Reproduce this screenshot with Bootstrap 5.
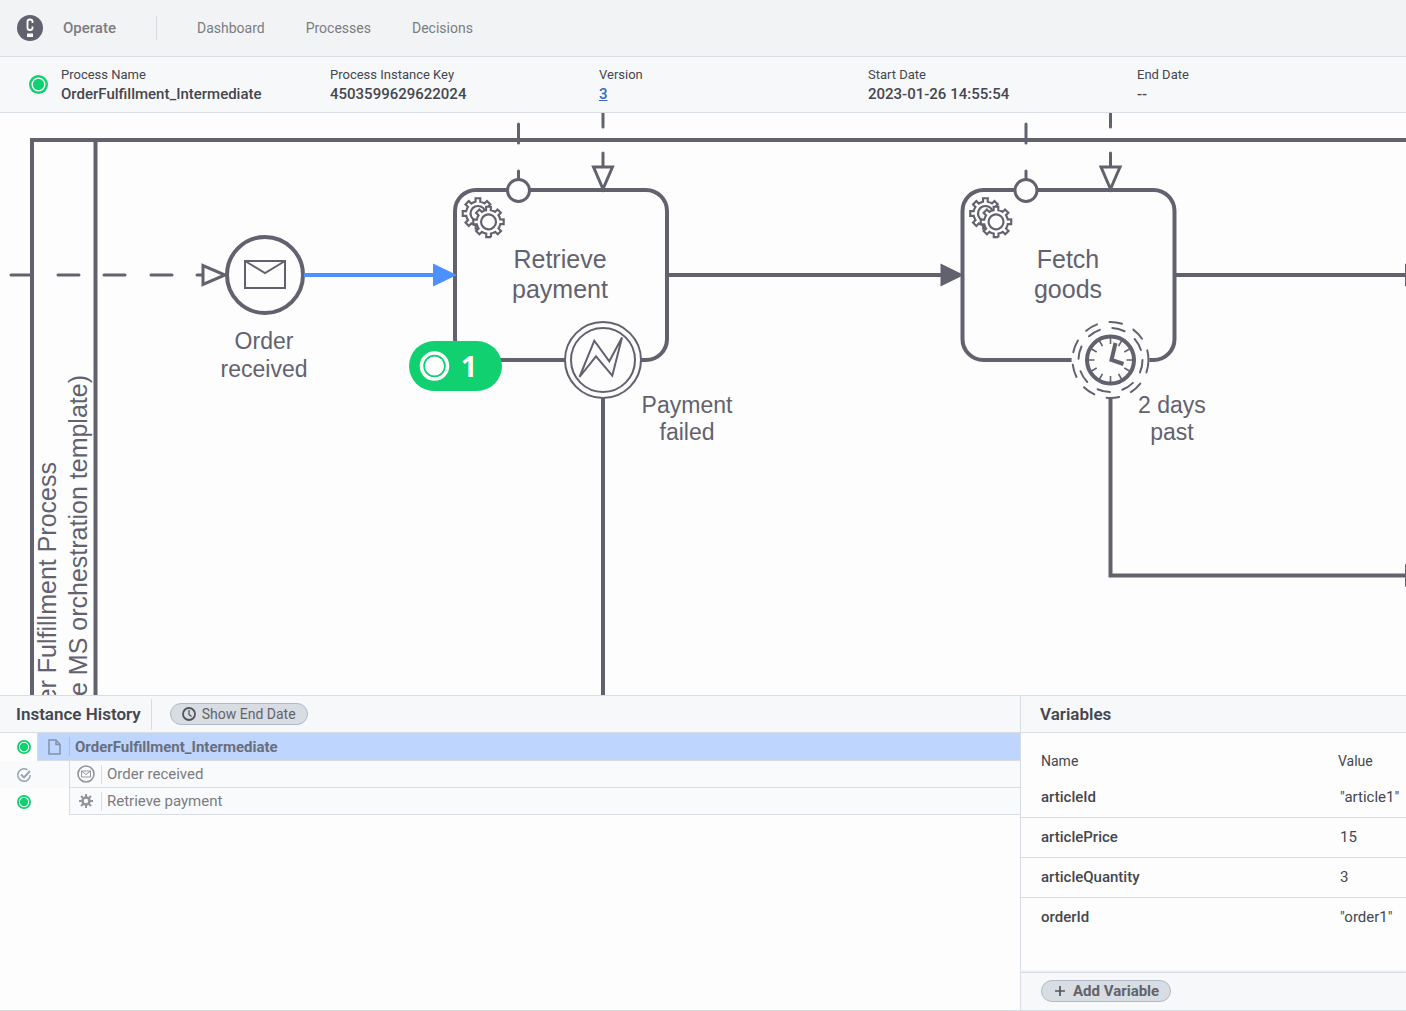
<!DOCTYPE html>
<html lang="en">
<head>
<meta charset="utf-8">
<meta name="viewport" content="width=device-width, initial-scale=1">
<title>Operate: OrderFulfillment_Intermediate</title>
<link href="https://cdn.jsdelivr.net/npm/bootstrap@5.3.0/dist/css/bootstrap.min.css" rel="stylesheet">
<style>
  :root { --line: #d8dce3; --panel: #f7f8fa; --ink: #45464e; --muted: #7b7c82; --shape: #62626e; }
  body { font-family: Roboto, "Noto Sans", sans-serif; font-size: 15px; line-height: 20px; color: var(--ink); background: #fdfdfe; overflow: hidden; }
  svg { display: block; flex: none; }
  .app-bar { background: #f2f3f5; border-bottom: 1px solid var(--line); height: 57px; padding: 0 16px; }
  .app-bar a { color: var(--muted); text-decoration: none; }
  .product { gap: 19px; font-weight: 500; }
  .rule { width: 1px; background: var(--line); }
  .app-bar .rule { height: 24px; margin: 0 40px; }
  .main-links { gap: 41px; font-size: 14px; }
  .instance-bar { background: var(--panel); border-bottom: 1px solid var(--line); height: 56px; padding-left: 29px; }
  .instance-bar svg { margin-right: 13px; }
  .instance-bar dl { flex: 1 1 0; min-width: 0; }
  .instance-bar dt { font-size: 13px; line-height: 18px; font-weight: 400; }
  .instance-bar dd { font-weight: 500; margin: 0; }
  .instance-bar dd a { color: #346ac4; }
  .diagram { min-height: 0; }
  .diagram text { font-family: "Liberation Sans", Arial, sans-serif; font-size: 25px; fill: var(--shape); text-anchor: middle; }
  .diagram .ext text { font-size: 23px; }
  .diagram .side text { text-anchor: end; }
  .diagram .tally { font-family: "Noto Sans", sans-serif; font-size: 29px; font-weight: 700; fill: #fff; }
  .bottom { height: 316px; border-top: 1px solid var(--line); border-bottom: 1px solid var(--line); }
  .history { flex: 0 0 1021px; width: 1021px; border-right: 1px solid var(--line); }
  .panel-head { height: 37px; background: var(--panel); border-bottom: 1px solid var(--line); }
  .panel-head h2 { font-size: 17px; line-height: 20px; font-weight: 600; margin: 0; }
  .panel-head .rule { height: 31px; margin: 0 18px 0 10px; }
  .pill { border: 1px solid #b0bac7; background: #d8dce3; border-radius: 11px; height: 22px; line-height: 20px; padding: 0 11px; color: #62636a; gap: 6px; }
  .panel-head .pill { font-size: 14px; }
  .tree-row { height: 27px; color: var(--muted); }
  .tree-row .state { width: 37px; padding-left: 17px; }
  .tree-row .node { background: #f9fafc; border-bottom: 1px solid var(--line); border-left: 1px solid var(--line); padding-left: 7px; }
  .tree-row .rule { height: 19px; margin: 0 5px 0 6px; }
  .tree-row.root { height: 28px; font-weight: 700; }
  .tree-row.root .node { background: #bed5fe; color: #6a6e7b; padding-left: 10px; }
  .tree-row.root .rule { background: #a8bfe6; margin-left: 8px; }
  .indent { width: 32px; }
  .done .state, .done .indent { background: #f9fafc; }
  .vars { min-width: 0; }
  .vars .panel-head { padding-left: 19px; }
  .vars table { --bs-table-bg: transparent; table-layout: fixed; color: var(--ink); }
  .vars th, .vars td { border-color: var(--line); padding: 0; height: 40px; vertical-align: middle; }
  .vars thead th { height: 44px; padding-top: 12px; font-size: 14px; font-weight: 400; border: 0; }
  .vars th:first-child { width: 317px; padding-left: 20px; }
  .vars tbody th { font-weight: 500; }
  .vars tbody td { padding-left: 2px; }
  .vars tbody tr:last-child > * { border: 0; }
  .vars-foot { height: 38px; background: var(--panel); border-top: 1px solid var(--line); box-shadow: 0 -1px 2px #e4e6ea; padding: 0 0 1px 20px; }
</style>
<script src="https://cdn.jsdelivr.net/npm/bootstrap@5.3.0/dist/js/bootstrap.bundle.min.js"></script>
</head>
<body class="vh-100 d-flex flex-column">

<svg width="0" height="0" class="position-absolute" aria-hidden="true">
  <defs>
    <symbol id="active" viewBox="0 0 18 18">
      <circle cx="9" cy="9" r="9" fill="#10d070"/><circle cx="9" cy="9" r="6" fill="none" stroke="#fff" stroke-width="1.3"/>
    </symbol>
    <path id="gear" d="m 0,0 v -1.71335 c 0.352326,-0.0705 0.703932,-0.17838 1.047628,-0.32133 0.344416,-0.14465 0.665822,-0.32133 0.966377,-0.52145 l 1.19431,1.18005 1.567487,-1.57688 -1.195028,-1.18014 c 0.403376,-0.61394 0.683079,-1.29908 0.825447,-2.01824 l 1.622133,-0.01 v -2.2196 l -1.636514,0.01 c -0.07333,-0.35153 -0.178319,-0.70024 -0.323564,-1.04372 -0.145244,-0.34406 -0.321407,-0.6644 -0.522735,-0.96217 l 1.131035,-1.13631 -1.583305,-1.56293 -1.129598,1.13589 c -0.614052,-0.40108 -1.302883,-0.68093 -2.022633,-0.82247 l 0.0093,-1.61852 h -2.241173 l 0.0042,1.63124 c -0.353763,0.0736 -0.705369,0.17977 -1.049785,0.32371 -0.344415,0.14437 -0.665102,0.32092 -0.9635006,0.52006 l -1.1698628,-1.15823 -1.5667691,1.5792 1.1684265,1.15669 c -0.4026573,0.61283 -0.68308,1.29797 -0.8247287,2.01713 l -1.6588041,0.003 v 2.22174 l 1.6724648,-0.006 c 0.073327,0.35077 0.1797598,0.70243 0.3242851,1.04472 0.1452428,0.34448 0.3214064,0.6644 0.5227339,0.96066 l -1.1993431,1.19723 1.5840256,1.56011 1.1964668,-1.19348 c 0.6140517,0.40346 1.3028827,0.68232 2.0233517,0.82331 l 7.19e-4,1.69892 h 2.226848 z m 0.221462,-3.9957 c -1.788948,0.7502 -3.8576,-0.0928 -4.6097055,-1.87438 -0.7521065,-1.78321 0.090598,-3.84627 1.8802645,-4.59604 1.78823,-0.74936 3.856881,0.0929 4.608987,1.87437 0.752106,1.78165 -0.0906,3.84612 -1.879546,4.59605 z"/>
    <!-- service task with its two message flows; origin is the top-left corner -->
    <g id="service-task" stroke="#62626e" fill="#fdfdfe">
      <rect width="212" height="170" rx="21" stroke-width="4"/>
      <g transform="scale(2.115)" stroke-width="1">
        <use href="#gear" x="12" y="18.3"/>
        <circle cx="15.8" cy="15.3" r="4.5" stroke="none"/>
        <use href="#gear" x="17" y="22.3"/>
      </g>
      <path d="M63.5-66v19M63.5-19v7M148-78v15M148-37v14" stroke-width="3" stroke-linecap="round"/>
      <circle cx="63.5" cy="0.5" r="11" stroke-width="3"/>
      <path d="M138.5-23h19L148-1z" stroke-width="3"/>
    </g>
  </defs>
</svg>

<header class="app-bar d-flex align-items-center">
  <a class="product d-flex align-items-center" href="#">
    <svg width="28" height="28" viewBox="0 0 28 28"><circle cx="14" cy="14" r="13" fill="#62626e"/><path d="M16.500 9V7.500Q16.500 5.500 14 5.500T11.500 7.500V14Q11.500 16 14 16T16.500 14V12.500" fill="none" stroke="#fff" stroke-width="1.8"/><path d="M11 19.500h6v3.500h-6z" fill="#fff"/></svg>
    Operate
  </a>
  <span class="rule"></span>
  <nav class="main-links d-flex" aria-label="Main">
    <a href="#">Dashboard</a><a href="#">Processes</a><a href="#">Decisions</a>
  </nav>
</header>

<section class="instance-bar d-flex align-items-center">
  <svg width="19" height="19" role="img" aria-label="Active"><use href="#active"/></svg>
  <dl class="mb-0"><dt>Process Name</dt><dd>OrderFulfillment_Intermediate</dd></dl>
  <dl class="mb-0"><dt>Process Instance Key</dt><dd>4503599629622024</dd></dl>
  <dl class="mb-0"><dt>Version</dt><dd><a href="#">3</a></dd></dl>
  <dl class="mb-0"><dt>Start Date</dt><dd>2023-01-26 14:55:54</dd></dl>
  <dl class="mb-0"><dt>End Date</dt><dd>--</dd></dl>
</section>

<main class="diagram flex-grow-1 overflow-hidden">
  <svg width="100%" height="100%" role="img" aria-label="Order fulfillment process diagram">
    <g transform="translate(0 -113)" fill="none" stroke="#62626e" stroke-width="4">
      <path d="M1500 140H32V720M95.500 140V720"/>
      <path d="M11 275H30M58 275H79M104 275H125M151 275H172M197 275H203" stroke-width="3" stroke-linecap="round"/>
      <path d="M203 265.500V284.500L225 275z" stroke-width="3" fill="#fdfdfe"/>
      <circle cx="265" cy="275" r="38" fill="#fdfdfe"/>
      <path d="M245 261h40v27h-40zl20 12 20-12" stroke-width="2"/>
      <use href="#service-task" x="455" y="190"/>
      <use href="#service-task" x="962.5" y="190"/>
      <path d="M304 275H436" stroke="#4d90ff"/>
      <path d="M433 263.500v23L457 275z" fill="#4d90ff" stroke="none"/>
      <path d="M668 275H944M1175 275H1406M603 398V720M1110.500 398V575.500H1406"/>
      <path d="M940.500 263.500v23L964 275zM1405 263.500v23L1429 275zM1405 564v23l24-11.500z" fill="#62626e" stroke="none"/>
      <g stroke-width="2">
        <circle cx="603" cy="360" r="38" fill="#fdfdfe"/><circle cx="603" cy="360" r="32"/>
        <path d="M579.500 377L594.300 340.700 609.300 361.300 622 337.500 612.300 375.700 596 356.300z"/>
        <circle cx="1110.5" cy="360" r="39" fill="#fdfdfe" stroke="none"/>
        <g stroke-dasharray="12.7" stroke-linecap="round"><circle cx="1110.5" cy="360" r="38"/><circle cx="1110.5" cy="360" r="32"/></g>
      </g>
      <g transform="translate(1110.5 360)">
        <circle r="23.5"/>
        <path stroke-width="1.6" d="M0-22v6M0 22v-6M-22 0h6M22 0h-6M11-19l-3 5.200M19-11l-5.200 3M19 11l-5.200-3M11 19l-3-5.200M-11 19l3-5.200M-19 11l5.200-3M-19-11l5.200 3M-11-19l3 5.200"/>
        <path d="M5-17L1 0 13 4"/>
      </g>
      <g stroke="none">
        <text x="560" y="268">Retrieve</text><text x="560" y="298">payment</text>
        <text x="1068" y="268">Fetch</text><text x="1068" y="298">goods</text>
        <g class="ext">
          <text x="264" y="349">Order</text><text x="264" y="377">received</text>
          <text x="687" y="413">Payment</text><text x="687" y="440">failed</text>
          <text x="1172" y="413">2 days</text><text x="1172" y="440">past</text>
        </g>
        <g class="side">
          <text transform="translate(56 462) rotate(-90)">er Fulfillment Process</text>
          <text transform="translate(87 375) rotate(-90)">e MS orchestration template)</text>
        </g>
        <rect x="409" y="341" width="93" height="50" rx="25" fill="#10d070"/>
        <circle cx="434.5" cy="366" r="13" stroke="#fff" stroke-width="3.5"/><circle cx="434.5" cy="366" r="9.5" fill="#fff"/>
        <text class="tally" x="469" y="377">1</text>
      </g>
    </g>
  </svg>
</main>

<div class="bottom d-flex flex-shrink-0">
  <section class="history d-flex flex-column">
    <div class="panel-head d-flex align-items-center ps-3">
      <h2>Instance History</h2>
      <span class="rule"></span>
      <button type="button" class="pill d-flex align-items-center">
        <svg width="14" height="14" viewBox="0 0 14 14" fill="none" stroke="#54555c"><circle cx="7" cy="7" r="6" stroke-width="1.8"/><path d="M7 3v4.500l2.500 2" stroke-width="1.3"/></svg>
        Show End Date
      </button>
    </div>
    <div class="tree-row root d-flex">
      <div class="state d-flex align-items-center"><svg width="14" height="14"><use href="#active"/></svg></div>
      <div class="node d-flex align-items-center flex-grow-1">
        <svg width="13" height="16" viewBox="0 0 13 16" fill="none" stroke="#8391a9" stroke-width="1.5"><path d="M1 1h7l4 4.500V15H1zM8 1v4.500h4"/></svg>
        <span class="rule"></span>OrderFulfillment_Intermediate
      </div>
    </div>
    <div class="tree-row done d-flex">
      <div class="state d-flex align-items-center"><svg width="14" height="14" viewBox="0 0 14 14" fill="none" stroke="#98a3b3"><path d="M10.500 1.900A6.200 6.200 0 1 0 13.200 7" stroke-width="1.5"/><path d="M4 6.500l3 3 6-6.500" stroke-width="2"/></svg></div>
      <div class="indent"></div>
      <div class="node d-flex align-items-center flex-grow-1">
        <svg width="18" height="18" viewBox="0 0 18 18" fill="none" stroke="#94959c"><circle cx="9" cy="9" r="8" stroke-width="1.6"/><path d="M4.500 6h9v6h-9zl4.500 3.500L13.500 6"/></svg>
        <span class="rule"></span>Order received
      </div>
    </div>
    <div class="tree-row d-flex">
      <div class="state d-flex align-items-center"><svg width="14" height="14"><use href="#active"/></svg></div>
      <div class="indent"></div>
      <div class="node d-flex align-items-center flex-grow-1">
        <svg width="18" height="18" viewBox="0 0 18 18" fill="none" stroke="#94959c"><circle cx="9" cy="9" r="3.5" stroke-width="2.6"/><path d="M9 2v3M9 13v3M2 9h3M13 9h3M4 4l2.200 2.200M11.800 11.800L14 14M14 4l-2.200 2.200M6.200 11.800L4 14" stroke-width="2"/></svg>
        <span class="rule"></span>Retrieve payment
      </div>
    </div>
  </section>

  <section class="vars d-flex flex-column flex-grow-1">
    <div class="panel-head d-flex align-items-center"><h2>Variables</h2></div>
    <div class="flex-grow-1 overflow-hidden">
      <table class="table mb-0">
        <thead><tr><th scope="col">Name</th><th scope="col">Value</th></tr></thead>
        <tbody>
          <tr><th scope="row">articleId</th><td>"article1"</td></tr>
          <tr><th scope="row">articlePrice</th><td>15</td></tr>
          <tr><th scope="row">articleQuantity</th><td>3</td></tr>
          <tr><th scope="row">orderId</th><td>"order1"</td></tr>
        </tbody>
      </table>
    </div>
    <div class="vars-foot d-flex align-items-center">
      <button type="button" class="pill d-flex align-items-center fw-bold">
        <svg width="14" height="14" viewBox="0 0 14 14" stroke="#54555c" stroke-width="1.7"><path d="M7 2v10M2 7h10"/></svg>
        Add Variable
      </button>
    </div>
  </section>
</div>
</body>
</html>
